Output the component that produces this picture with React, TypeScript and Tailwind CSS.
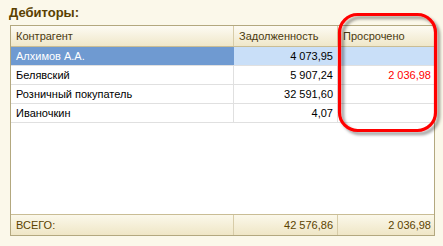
import React from 'react';

type Row = {
  name: string;
  debt: string;
  overdue?: string;
};

const rows: Row[] = [
  { name: 'Алхимов А.А.', debt: '4 073,95' },
  { name: 'Белявский', debt: '5 907,24', overdue: '2 036,98' },
  { name: 'Розничный покупатель', debt: '32 591,60' },
  { name: 'Иваночкин', debt: '4,07' },
];

const font = { fontFamily: '"Liberation Sans", Arial, sans-serif' };

function HighlightLoop() {
  return (
    <svg className="absolute left-[334px] top-[9px]" width="109" height="130" viewBox="0 0 109 130">
      <defs>
        <filter id="loopShadow" x="-10%" y="-10%" width="130%" height="130%">
          <feDropShadow dx="3" dy="3" stdDeviation="1.8" floodColor="#000" floodOpacity="0.4" />
        </filter>
      </defs>
      <rect x="5.5" y="5.5" width="96" height="116" rx="18" ry="18" fill="none" stroke="#ff0000" strokeWidth="3.2" filter="url(#loopShadow)" />
    </svg>
  );
}

export default function App() {
  return (
    <div className="relative w-[443px] h-[246px] bg-[#fbf8ea] overflow-hidden" style={font}>
      <div className="pl-[9px] pt-[5px] text-[13px] leading-[16px] font-bold text-[#5a4000]">Дебиторы:</div>

      <div className="mt-[4px] ml-[10px] w-[425px] h-[211px] border border-[#b3a87f] bg-white flex flex-col text-[11px]">
        <div className="flex h-[21px] border-b border-[#c9bd95] bg-gradient-to-b from-[#fdfbf3] to-[#efe7c9] text-[#4b3a10]">
          <div className="w-[223px] border-r border-[#d7cca8] pl-[5px] flex items-center">Контрагент</div>
          <div className="w-[104px] border-r border-[#d7cca8] pl-[5px] flex items-center">Задолженность</div>
          <div className="flex-1 pl-[5px] flex items-center">Просрочено</div>
        </div>

        {rows.map((row, i) => {
          const selected = i === 0;
          return (
            <div key={row.name} className="flex h-[19px] border-b border-[#e0e0e0] text-black">
              <div className={`w-[223px] border-r pl-[5px] flex items-center ${selected ? 'bg-[#6f9ad1] text-white border-[#6f9ad1]' : 'border-[#e0e0e0]'}`}>
                {row.name}
              </div>
              <div className={`w-[104px] border-r border-[#e0e0e0] pr-[4px] flex items-center justify-end ${selected ? 'bg-[#c9dff8]' : ''}`}>
                {row.debt}
              </div>
              <div className={`flex-1 pr-[3px] flex items-center justify-end text-[#ff0000] ${selected ? 'bg-[#c9dff8]' : ''}`}>
                {row.overdue}
              </div>
            </div>
          );
        })}

        <div className="flex-1" />

        <div className="flex h-[21px] border-t border-[#c9bd95] bg-gradient-to-b from-[#fbf8ea] to-[#efe6c6] text-[#5c4300]">
          <div className="w-[223px] border-r border-[#d7cca8] pl-[5px] flex items-center">ВСЕГО:</div>
          <div className="w-[104px] border-r border-[#d7cca8] pr-[4px] flex items-center justify-end">42 576,86</div>
          <div className="flex-1 pr-[3px] flex items-center justify-end">2 036,98</div>
        </div>
      </div>

      <HighlightLoop />
    </div>
  );
}
